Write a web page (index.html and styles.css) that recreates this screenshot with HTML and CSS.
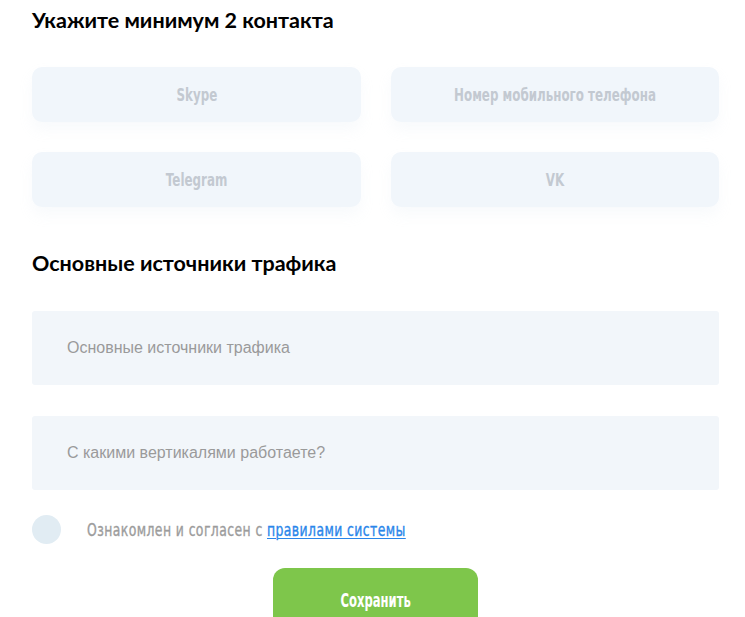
FILE: index.html
```html
<!DOCTYPE html>
<html lang="ru">
<head>
<meta charset="utf-8">
<link rel="stylesheet" href="styles.css">
</head>
<body>
<div class="page">
  <h2 class="title">Укажите минимум 2 контакта</h2>
  <div class="contacts">
    <div class="field"><span class="ph">Skype</span></div>
    <div class="field"><span class="ph">Номер мобильного телефона</span></div>
    <div class="field"><span class="ph">Telegram</span></div>
    <div class="field"><span class="ph">VK</span></div>
  </div>
  <h2 class="title title2">Основные источники трафика</h2>
  <div class="area"><span class="aph">Основные источники трафика</span></div>
  <div class="area"><span class="aph">С какими вертикалями работаете?</span></div>
  <div class="agree">
    <span class="check"></span>
    <span class="agree-text">Ознакомлен и согласен с <a href="#" class="link">правилами системы</a></span>
  </div>
  <div class="actions">
    <button class="save"><span class="save-label">Сохранить</span></button>
  </div>
</div>
</body>
</html>
```
FILE: styles.css
```css
html, body {
  margin: 0;
  padding: 0;
  background: #ffffff;
}
.page {
  width: 687px;
  padding: 0 0 0 32px;
  font-family: "Liberation Sans", Arial, sans-serif;
}
.title {
  margin: 0;
  padding-top: 7px;
  font-family: Lato, "Noto Sans", sans-serif;
  font-weight: 700;
  font-size: 21.5px;
  line-height: 26px;
  color: #000;
}
.contacts {
  display: grid;
  grid-template-columns: 329px 328px;
  column-gap: 30px;
  row-gap: 30px;
  margin-top: 34px;
}
.field {
  height: 55px;
  border-radius: 10px;
  background: #f1f6fb;
  box-shadow: 0 8px 14px rgba(200, 215, 230, 0.12);
  display: flex;
  align-items: center;
  justify-content: center;
}
.ph, .agree-text, .save-label {
  font-family: "DejaVu Sans", sans-serif;
  font-weight: 700;
  display: inline-block;
  white-space: nowrap;
}
.ph {
  font-size: 18px;
  color: #c3c9d1;
  transform: scaleX(0.66);
  transform-origin: center;
}
.title2 {
  margin-top: 36px;
}
.area {
  height: 74px;
  border-radius: 3px;
  background: #f2f6fa;
  display: flex;
  align-items: center;
  padding-left: 35px;
  margin-top: 35px;
}
.area + .area {
  margin-top: 31px;
}
.aph {
  font-size: 16px;
  color: #9a9a9a;
}
.agree {
  display: flex;
  align-items: center;
  margin-top: 25px;
  height: 29px;
}
.check {
  width: 29px;
  height: 29px;
  border-radius: 50%;
  background: #e1ecf3;
  flex: none;
}
.agree-text {
  margin-left: 26px;
  font-size: 18px;
  font-weight: 400;
  color: #9c9c9c;
  letter-spacing: 0.6px;
  transform: scaleX(0.69);
  transform-origin: left center;
  -webkit-text-stroke: 0.4px #9c9c9c;
}
.link {
  color: #2a86ea;
  -webkit-text-stroke: 0.4px #2a86ea;
  text-decoration: underline;
  text-decoration-thickness: 1px;
  text-underline-offset: 2px;
}
.actions {
  display: flex;
  justify-content: center;
  margin-top: 24px;
}
.save {
  width: 205px;
  height: 60px;
  border: none;
  border-radius: 12px 12px 0 0;
  background: #7ec64b;
  color: #fff;
  padding: 4px 0 0;
  margin: 0;
}
.save-label {
  font-size: 20px;
  color: #fff;
  transform: scaleX(0.58);
  transform-origin: center;
}
```
